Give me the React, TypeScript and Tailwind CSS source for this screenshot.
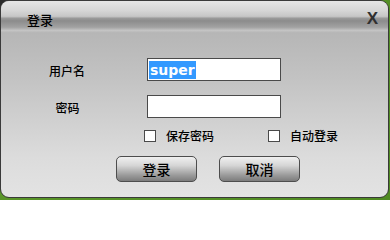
import React from "react";

const cjk = "font-['SimSun','Noto_Sans_CJK_SC',sans-serif] font-medium";

function Check({ label }: { label: string }) {
  return (
    <label className="flex items-center gap-[10px]">
      <span className="block w-[12px] h-[12px] bg-white border border-[#4a4a4a]" />
      <span className={`${cjk} text-[12px] leading-none text-black`}>{label}</span>
    </label>
  );
}

function Btn({ text }: { text: string }) {
  return (
    <button className="w-[81px] h-[26px] rounded-[5px] border border-[#4d4d4d] bg-[linear-gradient(to_bottom,#f0f0f0_0%,#d6d6d6_35%,#9c9c9c_75%,#7c7c7c_100%)] flex items-center justify-center">
      <span className={`${cjk} text-[14px] leading-none text-black`}>{text}</span>
    </button>
  );
}

export default function App() {
  return (
    <div className="w-[390px] h-[200px] bg-[linear-gradient(135deg,#2a2a2a_0%,#2a2a2a_3%,#5e9a2c_4%,#4f8a22_100%)] overflow-hidden">
      <div className="w-[389px] h-[198px] rounded-[9px] border border-[#3a3a3a] overflow-hidden flex flex-col bg-[linear-gradient(to_bottom,#adadad_0%,#c3c3c3_40%,#dcdcdc_80%,#e3e3e3_100%)]">
        {/* title bar */}
        <div className="h-[32px] shrink-0 flex items-center justify-between pl-[26px] pr-[10px] bg-[linear-gradient(to_bottom,#e6e6e6_0%,#d6d6d6_30%,#c6c6c6_48%,#9a9a9a_54%,#8c8c8c_62%,#a2a2a2_82%,#c4c4c4_92%,#b4b4b4_100%)]">
          <span className={`${cjk} text-[13px] leading-none text-black mt-[4px]`}>登录</span>
          <span className="font-['Liberation_Sans',sans-serif] font-bold text-[17px] leading-none text-[#303030] mt-[2px]">X</span>
        </div>
        {/* body */}
        <div className="flex flex-col pt-[25px]">
          <div className="flex items-center h-[23px]">
            <div className="w-[132px] text-center">
              <span className={`${cjk} text-[12px] leading-none text-black`}>用户名</span>
            </div>
            <div className="ml-[14px] w-[134px] h-[23px] bg-white border border-[#4a4a4a] flex items-center pl-[1px]">
              <span className="bg-[#3399ff] text-white font-['DejaVu_Sans',sans-serif] font-bold text-[14px] leading-[18px] px-[1px]">super</span>
            </div>
          </div>
          <div className="flex items-center h-[23px] mt-[14px]">
            <div className="w-[133px] text-center">
              <span className={`${cjk} text-[12px] leading-none text-black`}>密码</span>
            </div>
            <div className="ml-[13px] w-[134px] h-[23px] bg-white border border-[#4a4a4a]" />
          </div>
          <div className="flex items-center mt-[11px] pl-[143px] h-[14px]">
            <Check label="保存密码" />
            <div className="ml-[54px]">
              <Check label="自动登录" />
            </div>
          </div>
          <div className="flex items-center mt-[13px] pl-[115px] gap-[22px]">
            <Btn text="登录" />
            <Btn text="取消" />
          </div>
        </div>
      </div>
    </div>
  );
}
